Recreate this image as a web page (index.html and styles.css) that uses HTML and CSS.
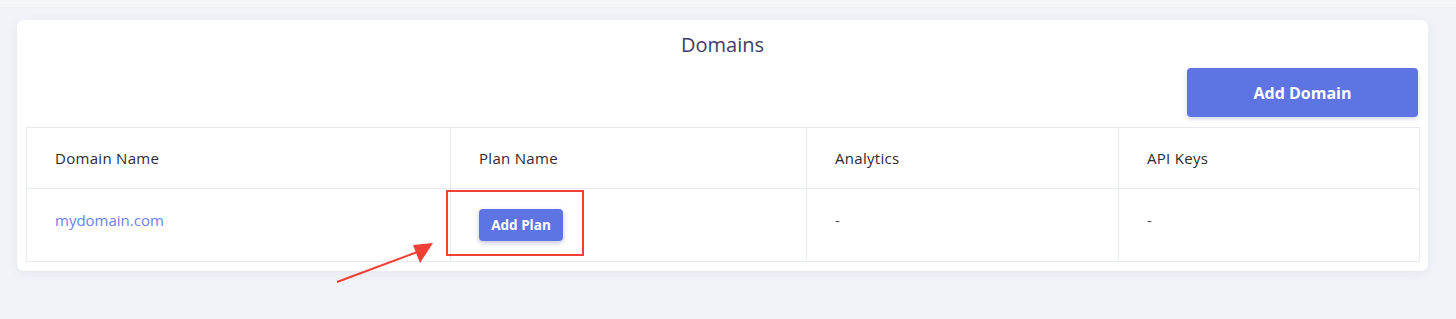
FILE: index.html
```html
<!DOCTYPE html>
<html>
<head>
<meta charset="utf-8">
<link rel="stylesheet" href="styles.css">
</head>
<body>
<div class="topstrip"></div>
<main class="page">
  <section class="card">
    <h2 class="title">Domains</h2>
    <div class="actions">
      <button class="btn-primary">Add Domain</button>
    </div>
    <table class="domains">
      <colgroup>
        <col class="c1"><col class="c2"><col class="c3"><col class="c4">
      </colgroup>
      <thead>
        <tr>
          <th>Domain Name</th>
          <th>Plan Name</th>
          <th>Analytics</th>
          <th>API Keys</th>
        </tr>
      </thead>
      <tbody>
        <tr>
          <td><a class="link" href="#">mydomain.com</a></td>
          <td><button class="btn-small">Add Plan</button></td>
          <td class="dash">-</td>
          <td class="dash">-</td>
        </tr>
      </tbody>
    </table>
  </section>
</main>
<div class="highlight"></div>
<svg class="arrow" width="1456" height="319" viewBox="0 0 1456 319">
  <line x1="337" y1="282" x2="420" y2="251" stroke="#ee4035" stroke-width="2"/>
  <polygon points="433,243 413,245 420,263" fill="#ee4035"/>
</svg>
</body>
</html>
```

FILE: styles.css
```css
html, body {
  margin: 0;
  padding: 0;
}
body {
  background: #f2f3f8;
  font-family: "Open Sans", "Noto Sans", sans-serif;
  width: 1456px;
  height: 319px;
  overflow: hidden;
  position: relative;
}
.topstrip {
  height: 7px;
  background: #f5f6f9;
  border-bottom: 1px solid #eef0f4;
}
.page {
  padding: 12px 28px 0 17px;
}
.card {
  background: #ffffff;
  border-radius: 7px;
  padding: 14px 9px 9px 9px;
  box-shadow: 0 2px 10px rgba(220, 224, 236, 0.6);
  display: flex;
  flex-direction: column;
}
.title {
  margin: 0;
  text-align: center;
  font-size: 20px;
  line-height: 22px;
  font-weight: 500;
  color: #3d3c6b;
}
.actions {
  display: flex;
  justify-content: flex-end;
  padding-right: 1px;
  margin-top: 12px;
  margin-bottom: 10px;
}
.btn-primary {
  width: 231px;
  height: 49px;
  border: none;
  border-radius: 4px;
  background: #5f74e3;
  color: #ffffff;
  font-family: "Open Sans", "Noto Sans", sans-serif;
  font-size: 16px;
  font-weight: 700;
  box-shadow: 0 2px 4px rgba(80, 90, 160, 0.25);
}
.domains {
  width: 1393px;
  border-collapse: collapse;
  table-layout: fixed;
}
.c1 { width: 424px; }
.c2 { width: 356px; }
.c3 { width: 312px; }
.c4 { width: 301px; }
.domains th, .domains td {
  border: 1px solid #e7eaf0;
  text-align: left;
  padding: 0 28px;
}
.domains th {
  height: 60px;
  font-size: 15px;
  letter-spacing: 0.3px;
  font-weight: 500;
  color: #2b2c30;
  vertical-align: middle;
}
.domains td {
  height: 30px;
  padding-top: 20px;
  padding-bottom: 20px;
  vertical-align: top;
  font-size: 15px;
  line-height: 22px;
  color: #555;
}
.link {
  color: #6c7fee;
  text-decoration: none;
}
.dash {
  color: #888;
}
.btn-small {
  width: 84px;
  height: 32px;
  border: none;
  border-radius: 4px;
  background: #5f74e3;
  color: #ffffff;
  font-family: "Open Sans", "Noto Sans", sans-serif;
  font-size: 13.5px;
  font-weight: 700;
  box-shadow: 0 2px 5px rgba(80, 90, 160, 0.35);
  padding: 0;
}
.highlight {
  position: absolute;
  left: 446px;
  top: 190px;
  width: 134px;
  height: 62px;
  border: 2px solid #ee4035;
}
.arrow {
  position: absolute;
  left: 0;
  top: 0;
  pointer-events: none;
}
```
